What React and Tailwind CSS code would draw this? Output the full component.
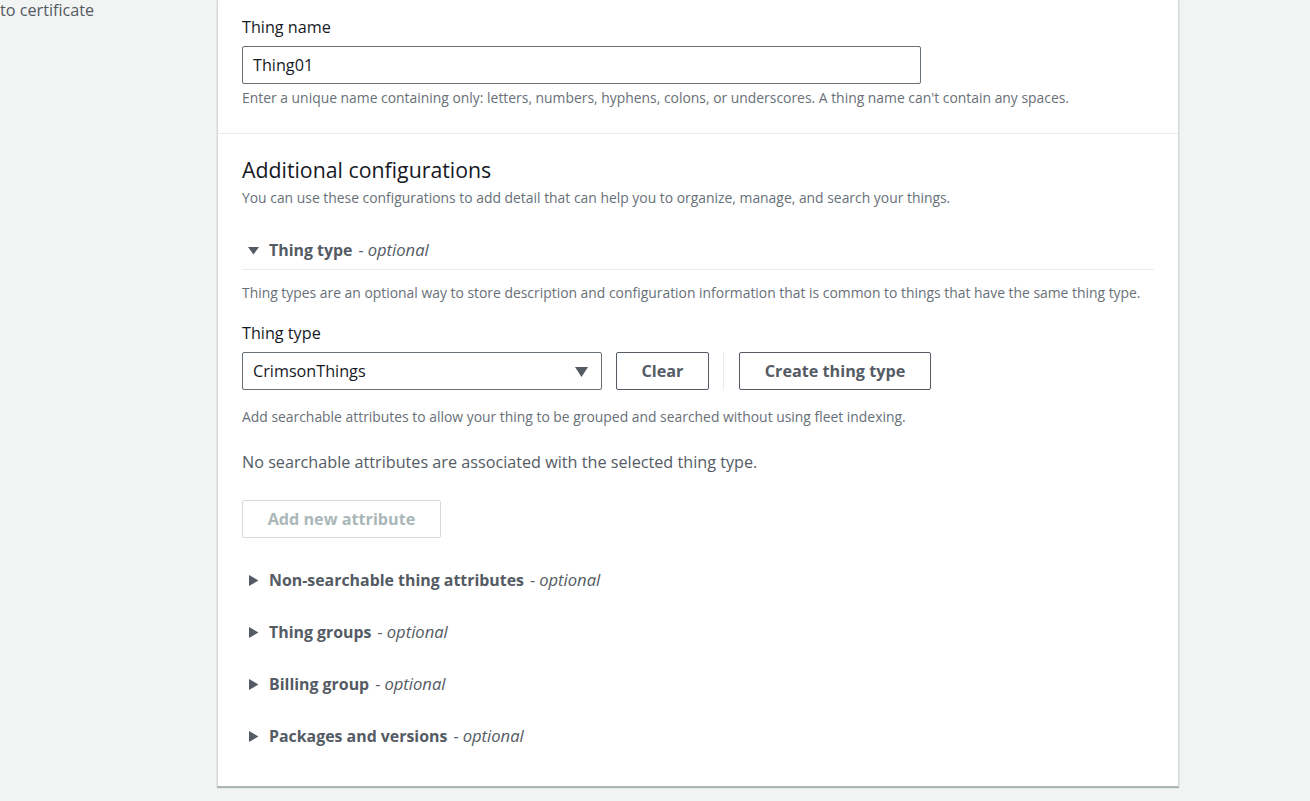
import React from 'react';

const FONT = { fontFamily: '"Open Sans", "Noto Sans", Arial, sans-serif' };

const Caret = ({ open }) => (
    <svg width="11" height="11" viewBox="0 0 11 11" className="shrink-0 text-[#545b64]" fill="currentColor">
        {open ? <path d="M0 2h11L5.5 9.5z" /> : <path d="M1 0v11l9.5-5.5z" />}
    </svg>
);

const Expander = ({ title, open }) => (
    <div className="flex items-center pl-[6px] h-[22px] text-[15.9px] leading-[22px] text-[#545b64]">
        <Caret open={open} />
        <span className="ml-[10px] font-bold">{title}</span>
        <span className="ml-[6px]">- <i className="text-[16.6px]">optional</i></span>
    </div>
);

const App = () => {
    return (
        <div className="min-h-[801px] bg-[#f2f3f3] text-[#16191f] relative overflow-hidden" style={FONT}>
            <div className="absolute left-0 top-0 text-[16.2px] leading-[20px] text-[#545b64]">to certificate</div>
            <div className="ml-[217px] w-[962px] bg-white border-x border-b border-[#d5dbdb] border-b-[#aab7b8] shadow-[0_1px_1px_0_rgba(0,28,36,0.3)]">
                {/* Thing name */}
                <div className="px-[24px] pt-[16px] pb-[26px] border-b border-[#eaeded]">
                    <div className="text-[16.2px] leading-[22px]">Thing name</div>
                    <div className="mt-[8px] w-[679px] h-[38px] border border-[#687078] rounded-[2px] flex items-center px-[10px] text-[16.2px]">
                        Thing01
                    </div>
                    <div className="mt-[5px] text-[13.9px] leading-[18px] text-[#687078]">
                        Enter a unique name containing only: letters, numbers, hyphens, colons, or underscores. A thing name can't contain any spaces.
                    </div>
                </div>

                {/* Additional configurations */}
                <div className="px-[24px] pt-[22px] pb-[39px]">
                    <div className="text-[21.3px] leading-[28px]">Additional configurations</div>
                    <div className="mt-[5px] text-[13.9px] leading-[18px] text-[#687078]">
                        You can use these configurations to add detail that can help you to organize, manage, and search your things.
                    </div>

                    <div className="mt-[32px] pb-[8px] border-b border-[#eaeded]">
                        <Expander title="Thing type" open />
                    </div>
                    <div className="mt-[14px] text-[13.9px] leading-[18px] text-[#687078]">
                        Thing types are an optional way to store description and configuration information that is common to things that have the same thing type.
                    </div>

                    <div className="mt-[20px] text-[16.2px] leading-[22px]">Thing type</div>
                    <div className="mt-[8px] flex items-center">
                        <div className="w-[360px] h-[38px] border border-[#687078] rounded-[2px] flex items-center justify-between pl-[10px] pr-[13px] text-[16.2px]">
                            <span>CrimsonThings</span>
                            <svg width="13" height="11" viewBox="0 0 13 11" fill="#545b64"><path d="M0 1h13L6.5 11z" /></svg>
                        </div>
                        <button className="ml-[14px] w-[93px] h-[38px] border border-[#545b64] rounded-[2px] text-[16.2px] font-bold text-[#545b64]">
                            Clear
                        </button>
                        <div className="mx-[14px] w-px h-[38px] bg-[#eaeded]" />
                        <button className="ml-px w-[192px] h-[38px] border border-[#545b64] rounded-[2px] text-[16.2px] font-bold text-[#545b64]">
                            Create thing type
                        </button>
                    </div>
                    <div className="mt-[18px] text-[13.9px] leading-[18px] text-[#687078]">
                        Add searchable attributes to allow your thing to be grouped and searched without using fleet indexing.
                    </div>
                    <div className="mt-[25px] text-[16.2px] leading-[22px] text-[#545b64]">
                        No searchable attributes are associated with the selected thing type.
                    </div>
                    <button className="mt-[27px] w-[199px] h-[38px] border border-[#d5dbdb] rounded-[2px] text-[16.2px] font-bold text-[#aab7b8]">
                        Add new attribute
                    </button>

                    <div className="mt-[31px] flex flex-col gap-[30px]">
                        <Expander title="Non-searchable thing attributes" />
                        <Expander title="Thing groups" />
                        <Expander title="Billing group" />
                        <Expander title="Packages and versions" />
                    </div>
                </div>
            </div>
        </div>
    );
};

export default App;
